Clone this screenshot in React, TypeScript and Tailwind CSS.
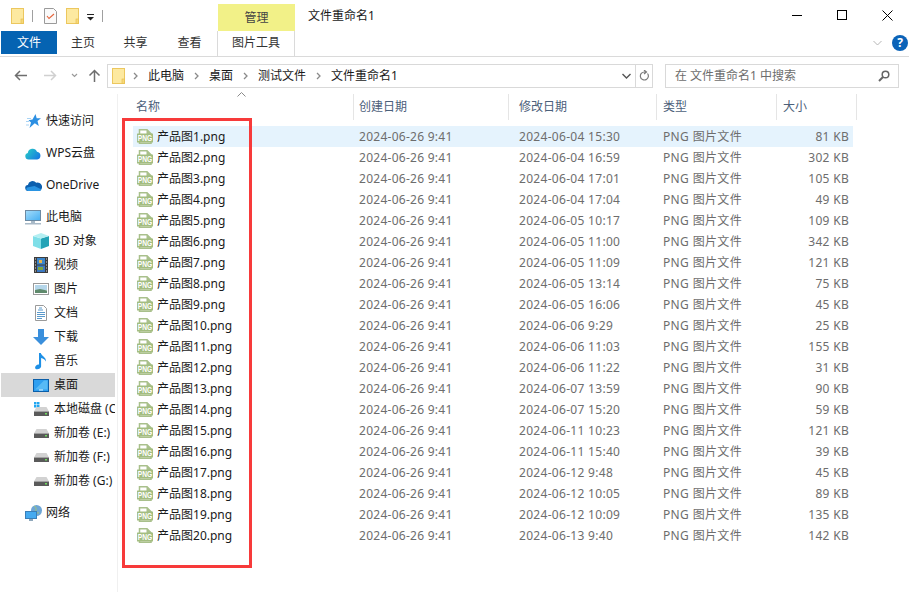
import React from "react";

const font = { fontFamily: '"Noto Sans", "Noto Sans CJK SC", sans-serif' };

const rows: [string, string, string][] = [
  ["1", "2024-06-04 15:30", "81 KB"],
  ["2", "2024-06-04 16:59", "302 KB"],
  ["3", "2024-06-04 17:01", "105 KB"],
  ["4", "2024-06-04 17:04", "49 KB"],
  ["5", "2024-06-05 10:17", "109 KB"],
  ["6", "2024-06-05 11:00", "342 KB"],
  ["7", "2024-06-05 11:09", "121 KB"],
  ["8", "2024-06-05 13:14", "75 KB"],
  ["9", "2024-06-05 16:06", "45 KB"],
  ["10", "2024-06-06 9:29", "25 KB"],
  ["11", "2024-06-06 11:03", "155 KB"],
  ["12", "2024-06-06 11:22", "31 KB"],
  ["13", "2024-06-07 13:59", "90 KB"],
  ["14", "2024-06-07 15:20", "59 KB"],
  ["15", "2024-06-11 10:23", "121 KB"],
  ["16", "2024-06-11 15:40", "39 KB"],
  ["17", "2024-06-12 9:48", "45 KB"],
  ["18", "2024-06-12 10:05", "89 KB"],
  ["19", "2024-06-12 10:09", "135 KB"],
  ["20", "2024-06-13 9:40", "142 KB"],
];

function Folder() {
  return (
    <svg width="13" height="16" viewBox="0 0 13 16" className="shrink-0">
      <rect x="0.500" y="0.500" width="12" height="15" fill="#fde9a0" stroke="#ecc75e" />
      <rect x="10" y="11" width="2.500" height="4.500" fill="#f7d978" stroke="#e3bb4c" strokeWidth="0.600" />
    </svg>
  );
}

function PngIcon() {
  return (
    <svg width="16" height="15" viewBox="0 0 16 15" overflow="visible" className="shrink-0 overflow-visible">
      <path d="M2.500.750h7.500l4 4v2h-11.500z" fill="#fff" stroke="#a9c08c" strokeWidth="1.500" />
      <path d="M9.500 0v5h5z" fill="#a9c08c" />
      <path d="M2.500 13v1.250h11.500V13" fill="#fff" stroke="#a9c08c" strokeWidth="1.500" />
      <rect x="0" y="4.500" width="16" height="9" rx="0.500" fill="#a3bd80" />
      <text x="0.800" y="12.300" textLength="14.400" lengthAdjust="spacingAndGlyphs" fontSize="9" fontWeight="700" fill="#fff" fontFamily='"Liberation Sans", sans-serif'>PNG</text>
    </svg>
  );
}

function Nav({ indent, icon, label, active, gapTop }: { indent: boolean; icon: React.ReactNode; label: string; active?: boolean; gapTop?: number }) {
  return (
    <div
      className={`h-6 flex items-center w-[114px] overflow-hidden whitespace-nowrap text-[12px] text-[#1a1a1a] ${active ? "bg-[#d9d9d9]" : ""} ${indent ? "pl-[31px]" : "pl-[23px]"}`}
      style={gapTop ? { marginTop: gapTop } : undefined}
    >
      <span className="w-[18px] h-[18px] flex items-center justify-center shrink-0 mr-[4px]">{icon}</span>
      <span>{label}</span>
    </div>
  );
}

const Star = (
  <svg width="15" height="14" viewBox="0 0 15 14"><path d="M9.500 0l1.200 4.300H15l-3.500 2.700 1.300 5-4-2.700L3.500 14l1.500-5.500-2.500-2.200 4-.7z" fill="#2c8fe2" /><path d="M1 4.500h4M0 7.500h3M0 11h3" stroke="#a8d3f4" /></svg>
);
const WpsCloud = (
  <svg width="16" height="13" viewBox="0 0 16 13">
    <defs><linearGradient id="wps" x1="0" y1="0" x2="1" y2="0.600"><stop offset="0" stopColor="#28d1c4" /><stop offset="1" stopColor="#1a7fe0" /></linearGradient></defs>
    <path d="M3.500 12.500a3.300 3.300 0 0 1-.7-6.500 4.800 4.800 0 0 1 9.200-1.200 3.900 3.900 0 0 1 .3 7.700z" fill="url(#wps)" />
  </svg>
);
const OneDrive = (
  <svg width="17" height="11" viewBox="0 0 17 11"><path d="M3.500 11a3 3 0 0 1-.6-6A4.700 4.700 0 0 1 11.200 2.800a3.600 3.600 0 0 1 3 8.200z" fill="#0c5fae" /><path d="M3.500 11a2 2 0 0 1-1.500-3.500L9.500 6l7 3.500A2.500 2.500 0 0 1 14 11z" fill="#2a94e2" /></svg>
);
const Pc = (
  <svg width="16" height="15" viewBox="0 0 16 15">
    <defs><linearGradient id="pc" x1="0" y1="0" x2="1" y2="1"><stop offset="0" stopColor="#a6ddfb" /><stop offset="1" stopColor="#45aef2" /></linearGradient></defs>
    <rect x="0.500" y="0.500" width="15" height="10" fill="url(#pc)" stroke="#6c8aa3" />
    <rect x="6" y="11" width="4" height="2" fill="#a9bac8" /><rect x="0" y="13" width="16" height="1.500" fill="#a9bac8" />
  </svg>
);
const Cube = (
  <svg width="16" height="16" viewBox="0 0 16 16"><path d="M8 5.500l8-2.500v10l-8 3z" fill="#23a3b6" /><path d="M8 5.500L0 3v10l8 3z" fill="#7fdfe8" /><path d="M8 0l8 3-8 2.500L0 3z" fill="#b4eff2" /></svg>
);
const Film = (
  <svg width="14" height="16" viewBox="0 0 14 16"><rect width="14" height="16" fill="#3c3c3c" /><rect x="3" y="1" width="8" height="6.500" fill="#3a86cc" /><rect x="3" y="8.500" width="8" height="6.500" fill="#3b78c0" /><rect x="5" y="3" width="3" height="3" fill="#e5b34a" /><rect x="4" y="10" width="5" height="3" fill="#7ca43f" /><path d="M1 2h1M1 5h1M1 8h1M1 11h1M1 14h1M12 2h1M12 5h1M12 8h1M12 11h1M12 14h1" stroke="#ddd" /></svg>
);
const Pic = (
  <svg width="16" height="12" viewBox="0 0 16 12"><rect x="0.500" y="0.500" width="15" height="11" fill="#fff" stroke="#9a9a9a" /><rect x="2" y="2" width="12" height="5" fill="#b5d6ea" /><path d="M2 7l5-1 7 1.500V10H2z" fill="#5f8a6c" /></svg>
);
const Doc = (
  <svg width="12" height="16" viewBox="0 0 12 16"><path d="M.5.500h8l3 3v12H.500z" fill="#fff" stroke="#9a9a9a" /><path d="M4 3h3M3 5h5M2 7.500h8M2 9.500h8M2 11.500h8M2 13.500h5" stroke="#5a9acc" /></svg>
);
const Down = (
  <svg width="16" height="16" viewBox="0 0 16 16"><path d="M5 0h6v8h5l-8 8-8-8h5z" fill="#3a8fdc" /></svg>
);
const Music = (
  <svg width="12" height="17" viewBox="0 0 12 17"><path d="M4 0h1.800c.5 3 6 4.500 5 8.500-.5-2-2.700-3-4.700-3.500V13.500c0 2.500-5.600 4.200-6 1.200C0 12.500 2.500 11 4 11.500z" fill="#1e90e6" /></svg>
);
const Desk = (
  <svg width="16" height="13" viewBox="0 0 16 13"><rect x="0.500" y="0.500" width="15" height="12" fill="#2f9ff0" stroke="#0b5ea8" /><path d="M2 10.500L11 1.500h3.500v9z" fill="#57baf6" /><rect x="6" y="10.500" width="4" height="1" fill="#e8f5ff" /></svg>
);
const Hdd = (
  <svg width="15" height="9" viewBox="0 0 15 9"><path d="M2.500 0h10l2.500 4.500H0z" fill="#d2d2d2" /><rect y="4.500" width="15" height="4.500" fill="#5a5a5a" /><rect x="11" y="6" width="2" height="1.500" fill="#6fdc5f" /></svg>
);
const SysHdd = (
  <svg width="15" height="14" viewBox="0 0 15 14"><rect x="0" y="0" width="2.500" height="2.500" fill="#22a6f0" /><rect x="3" y="0" width="2.500" height="2.500" fill="#22a6f0" /><rect x="0" y="3" width="2.500" height="2.500" fill="#22a6f0" /><rect x="3" y="3" width="2.500" height="2.500" fill="#22a6f0" /><path d="M2.500 5h10l2.500 4.500H0z" fill="#d2d2d2" /><rect y="9.500" width="15" height="4.500" fill="#5a5a5a" /><rect x="11" y="11" width="2" height="1.500" fill="#6fdc5f" /></svg>
);
const Net = (
  <svg width="17" height="16" viewBox="0 0 17 16"><circle cx="11.500" cy="5.500" r="5.500" fill="#6ea6d6" /><path d="M9 1q3 1 2 4t3 3" stroke="#9cc47a" fill="none" /><rect x="0.500" y="6.500" width="11" height="7" fill="#45aaf0" stroke="#3a7fb8" /><rect x="4" y="14" width="4" height="2" fill="#8fa8bb" /></svg>
);

function Chev() {
  return (
    <svg width="6" height="8" viewBox="0 0 6 8" className="shrink-0"><path d="M1 1l3 3-3 3" fill="none" stroke="#8a8a8a" strokeWidth="1.300" /></svg>
  );
}

function HeaderCell({ label, w, pl }: { label: string; w: string; pl: string }) {
  return (
    <div className={`${w} ${pl} h-[26px] flex items-center border-r border-[#e5e5e5] shrink-0 text-[12px] text-[#4c607a]`}>{label}</div>
  );
}

export default function App() {
  return (
    <div className="w-[909px] h-[592px] bg-white overflow-hidden relative flex flex-col" style={font}>
      {/* title bar */}
      <div className="h-[31px] flex shrink-0">
        <div className="w-[218px] flex items-center pl-[11px] pt-[1px]">
          <Folder />
          <div className="w-px h-3 bg-[#a0a0a0] ml-[8px] mr-[11px]" />
          <svg width="13" height="16" viewBox="0 0 13 16" className="shrink-0"><path d="M.5.500h9l3 3v12H.500z" fill="#fafafa" stroke="#9a9a9a" /><path d="M3 8l2 2.500L10 6" fill="none" stroke="#e5633a" strokeWidth="1.100" /></svg>
          <div className="w-[9px]" />
          <Folder />
          <svg width="7" height="7" viewBox="0 0 7 7" className="ml-[8px] mt-[2px]"><rect y="0" width="7" height="1" fill="#222" /><path d="M0 3h7L3.500 6.500z" fill="#222" /></svg>
          <div className="w-px h-3 bg-[#a0a0a0] ml-[8px]" />
        </div>
        <div className="w-[77px] mt-[4px] bg-[#f2f188] flex items-center justify-center text-[12px] text-[#444]">管理</div>
        <div className="pl-[13px] flex-1 flex items-center text-[12px] text-[#1a1a1a]">文件重命名1</div>
        <div className="flex items-center justify-end pr-[16px] gap-[35px] pb-[1px]">
          <div className="w-[10px] h-px bg-black" />
          <div className="w-[10px] h-[10px] border border-black" />
          <svg width="11" height="11" viewBox="0 0 11 11"><path d="M.5.500l10 10M10.500.500l-10 10" stroke="#000" /></svg>
        </div>
      </div>
      {/* ribbon tabs */}
      <div className="h-[26px] flex shrink-0 border-b border-[#dadada] text-[12px] text-[#333]">
        <div className="ml-[1px] w-[56px] h-[23px] pt-[1px] bg-[#0563b2] text-white flex items-center justify-center">文件</div>
        <div className="w-[52px] h-[23px] pt-[1px] flex items-center justify-center">主页</div>
        <div className="w-[53px] h-[23px] pt-[1px] flex items-center justify-center">共享</div>
        <div className="w-[55px] h-[23px] pt-[1px] flex items-center justify-center">查看</div>
        <div className="w-[78px] h-[25px] border-x border-[#dadada] pb-[1px] flex items-center justify-center">图片工具</div>
        <div className="flex-1 flex items-center justify-end pr-[1px] pb-[2px] gap-[10px]">
          <svg width="9" height="6" viewBox="0 0 9 6"><path d="M.5 1l4 4 4-4" fill="none" stroke="#b5b5b5" /></svg>
          <div className="w-4 h-4 rounded-full bg-[#0b63b8] text-white flex items-center justify-center text-[12px] font-bold">?</div>
        </div>
      </div>
      {/* address row */}
      <div className="h-[37px] flex items-center shrink-0">
        <div className="w-[107px] flex items-center pl-[14px]">
          <svg width="13" height="11" viewBox="0 0 13 11"><path d="M6 1L1.500 5.500 6 10M1.500 5.500H13" fill="none" stroke="#6e6e6e" strokeWidth="1.500" /></svg>
          <svg width="13" height="11" viewBox="0 0 13 11" className="ml-[17px]"><path d="M7 1l4.500 4.500L7 10M11.500 5.500H0" fill="none" stroke="#d0d0d0" strokeWidth="1.500" /></svg>
          <svg width="7" height="5" viewBox="0 0 7 5" className="ml-[14px]"><path d="M1 1l2.500 2.500L6 1" fill="none" stroke="#9a9a9a" strokeWidth="1.200" /></svg>
          <svg width="13" height="13" viewBox="0 0 13 13" className="ml-[10px]"><path d="M1.500 6.500L6.500 1.500l5 5M6.500 1.500V13" fill="none" stroke="#6e6e6e" strokeWidth="1.500" /></svg>
        </div>
        <div className="w-[546px] h-[24px] border border-[#d9d9d9] flex items-center text-[12px] text-[#1a1a1a] shrink-0">
          <div className="ml-[4px] mr-[8px]"><Folder /></div>
          <Chev />
          <span className="ml-[9px] mr-[10px]">此电脑</span>
          <Chev />
          <span className="ml-[9px] mr-[10px]">桌面</span>
          <Chev />
          <span className="ml-[9px] mr-[10px]">测试文件</span>
          <Chev />
          <span className="ml-[9px]">文件重命名1</span>
          <div className="flex-1" />
          <svg width="9" height="6" viewBox="0 0 9 6" className="mr-[4px]"><path d="M.5 1l4 4 4-4" fill="none" stroke="#555" strokeWidth="1.400" /></svg>
          <div className="w-[17px] h-full border-l border-[#d9d9d9] flex items-center justify-center">
            <svg width="11" height="12" viewBox="0 0 11 12"><path d="M8.500 3.500a4 4 0 1 1-3-1.500H7M5 0l2.500 2L5 4" fill="none" stroke="#7a7a7a" strokeWidth="1.200" /></svg>
          </div>
        </div>
        <div className="ml-[12px] w-[234px] h-[24px] border border-[#d9d9d9] flex items-center pl-[9px] pr-[8px] justify-between text-[12px] text-[#6d6d6d] shrink-0">
          <span>在 文件重命名1 中搜索</span>
          <svg width="12" height="12" viewBox="0 0 12 12"><circle cx="7.500" cy="4.500" r="3.300" fill="none" stroke="#666" strokeWidth="1.500" /><path d="M5 7l-4 4" stroke="#666" strokeWidth="2" /></svg>
        </div>
      </div>
      {/* main */}
      <div className="flex flex-1 min-h-0">
        <div className="w-[118px] shrink-0 border-r border-[#f0f0f0] pt-[15px] pl-[1px]">
          <Nav indent={false} icon={Star} label="快速访问" />
          <Nav indent={false} icon={WpsCloud} label="WPS云盘" gapTop={8} />
          <Nav indent={false} icon={OneDrive} label="OneDrive" gapTop={8} />
          <Nav indent={false} icon={Pc} label="此电脑" gapTop={8} />
          <Nav indent icon={Cube} label="3D 对象" />
          <Nav indent icon={Film} label="视频" />
          <Nav indent icon={Pic} label="图片" />
          <Nav indent icon={Doc} label="文档" />
          <Nav indent icon={Down} label="下载" />
          <Nav indent icon={Music} label="音乐" />
          <Nav indent icon={Desk} label="桌面" active />
          <Nav indent icon={SysHdd} label="本地磁盘 (C" />
          <Nav indent icon={Hdd} label="新加卷 (E:)" />
          <Nav indent icon={Hdd} label="新加卷 (F:)" />
          <Nav indent icon={Hdd} label="新加卷 (G:)" />
          <Nav indent={false} icon={Net} label="网络" gapTop={8} />
        </div>
        <div className="flex-1 min-w-0 relative">
          <div className="flex pl-[12px]">
            <HeaderCell label="名称" w="w-[224px]" pl="pl-[6px]" />
            <HeaderCell label="创建日期" w="w-[155px]" pl="pl-[5px]" />
            <HeaderCell label="修改日期" w="w-[148px]" pl="pl-[10px]" />
            <HeaderCell label="类型" w="w-[120px]" pl="pl-[6px]" />
            <HeaderCell label="大小" w="w-[80px]" pl="pl-[6px]" />
          </div>
          <svg width="9" height="5" viewBox="0 0 9 5" className="absolute left-[119px] top-[-2px]"><path d="M.5 4.500l4-4 4 4" fill="none" stroke="#8a8a8a" /></svg>
          <div className="mt-[6px] ml-[15px] w-[720px] text-[12px]">
            {rows.map(([n, m, s], i) => (
              <div key={n} className={`h-[21px] flex items-center ${i === 0 ? "bg-[#e5f3fd]" : ""}`}>
                <div className="w-[226px] flex items-center pl-[4px] text-[#1a1a1a]">
                  <PngIcon />
                  <span className="ml-[4px]">产品图{n}.png</span>
                </div>
                <div className="w-[160px] text-[#6d6d6d] tracking-[0.27px]">2024-06-26 9:41</div>
                <div className="w-[144px] text-[#6d6d6d] tracking-[0.3px]">{m}</div>
                <div className="w-[120px] text-[#6d6d6d] tracking-[0.35px]">PNG 图片文件</div>
                <div className="w-[66px] text-right text-[#6d6d6d] tracking-[0.3px]">{s}</div>
              </div>
            ))}
          </div>
        </div>
      </div>
      {/* annotation */}
      <div className="absolute left-[122px] top-[118px] w-[130px] h-[450px] border-[3px] border-[#f73a3a]" />
    </div>
  );
}
